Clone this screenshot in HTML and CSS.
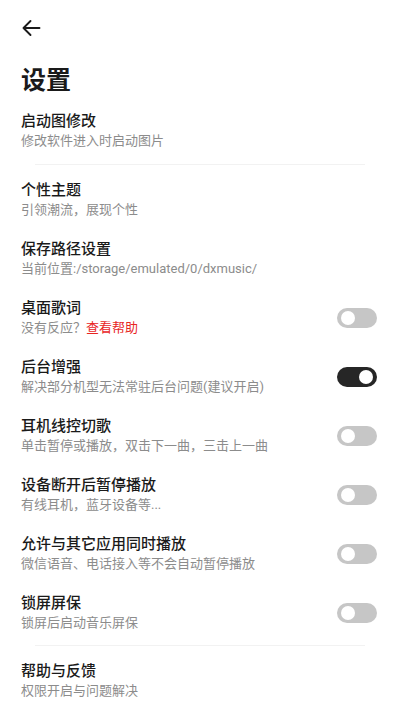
FILE: index.html
```html
<!DOCTYPE html>
<html lang="zh-CN">
<head>
  <meta charset="UTF-8">
  <title>设置</title>
  <link rel="stylesheet" href="styles.css">
</head>
<body>
  <div class="topbar">
    <svg class="back" width="20" height="20" viewBox="0 0 20 20">
      <path d="M18.5 10H2.5M9.5 3L2.5 10L9.5 17" fill="none" stroke="#1a1a1a" stroke-width="1.9" stroke-linecap="round" stroke-linejoin="round"/>
    </svg>
  </div>

  <h1>设置</h1>

  <div class="item">
    <div class="text">
      <div class="title">启动图修改</div>
      <div class="sub">修改软件进入时启动图片</div>
    </div>
  </div>

  <div class="divider"></div>

  <div class="item">
    <div class="text">
      <div class="title">个性主题</div>
      <div class="sub">引领潮流，展现个性</div>
    </div>
  </div>
  <div class="item">
    <div class="text">
      <div class="title">保存路径设置</div>
      <div class="sub">当前位置:/storage/emulated/0/dxmusic/</div>
    </div>
  </div>
  <div class="item">
    <div class="text">
      <div class="title">桌面歌词</div>
      <div class="sub">没有反应？<span class="link">查看帮助</span></div>
    </div>
    <div class="switch"></div>
  </div>
  <div class="item">
    <div class="text">
      <div class="title">后台增强</div>
      <div class="sub">解决部分机型无法常驻后台问题(建议开启)</div>
    </div>
    <div class="switch on"></div>
  </div>
  <div class="item">
    <div class="text">
      <div class="title">耳机线控切歌</div>
      <div class="sub">单击暂停或播放，双击下一曲，三击上一曲</div>
    </div>
    <div class="switch"></div>
  </div>
  <div class="item">
    <div class="text">
      <div class="title">设备断开后暂停播放</div>
      <div class="sub">有线耳机，蓝牙设备等...</div>
    </div>
    <div class="switch"></div>
  </div>
  <div class="item">
    <div class="text">
      <div class="title">允许与其它应用同时播放</div>
      <div class="sub">微信语音、电话接入等不会自动暂停播放</div>
    </div>
    <div class="switch"></div>
  </div>
  <div class="item">
    <div class="text">
      <div class="title">锁屏屏保</div>
      <div class="sub">锁屏后启动音乐屏保</div>
    </div>
    <div class="switch"></div>
  </div>

  <div class="divider last"></div>

  <div class="item">
    <div class="text">
      <div class="title">帮助与反馈</div>
      <div class="sub">权限开启与问题解决</div>
    </div>
  </div>
</body>
</html>
```

FILE: styles.css
```css
body {
  margin: 0;
  background: #fff;
  font-family: Roboto, "Noto Sans CJK SC", sans-serif;
  color: #1a1a1a;
  overflow: hidden;
}
.topbar {
  height: 56px;
  display: flex;
  align-items: center;
  padding-left: 21px;
}
.back {
  display: block;
}
h1 {
  margin: 9px 0 4px;
  padding-left: 21px;
  font-size: 25px;
  line-height: 32px;
  font-weight: 700;
}
.item {
  height: 59px;
  box-sizing: border-box;
  padding: 10px 23px 10px 21px;
  display: flex;
  align-items: center;
  justify-content: space-between;
}
.title {
  font-size: 15px;
  line-height: 20px;
  font-weight: 500;
}
.sub {
  margin-top: 1px;
  font-size: 13px;
  line-height: 18px;
  color: #8c8c8c;
}
.link {
  color: #e8251f;
}
.divider {
  height: 1px;
  background: #f2f2f2;
  margin: 4px 35px 5px;
}
.divider.last {
  margin: 3px 35px 5px;
}
.switch {
  position: relative;
  width: 40px;
  height: 20px;
  border-radius: 10px;
  background: #c6c6c6;
  flex-shrink: 0;
}
.switch::after {
  content: "";
  position: absolute;
  top: 3px;
  left: 4px;
  width: 14px;
  height: 14px;
  border-radius: 50%;
  background: #fff;
}
.switch.on {
  background: #262626;
}
.switch.on::after {
  left: auto;
  right: 4px;
}
```
